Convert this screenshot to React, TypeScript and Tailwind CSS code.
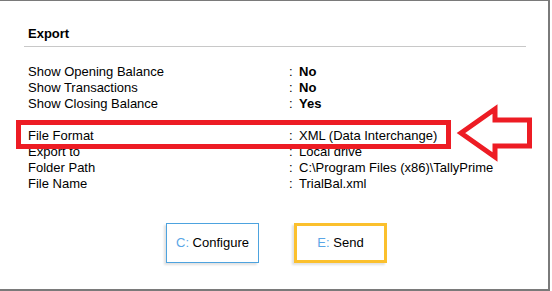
import React from 'react';

const rows1 = [
  { label: 'Show Opening Balance', value: 'No', bold: true },
  { label: 'Show Transactions', value: 'No', bold: true },
  { label: 'Show Closing Balance', value: 'Yes', bold: true },
];

const rows2 = [
  { label: 'File Format', value: 'XML (Data Interchange)' },
  { label: 'Export to', value: 'Local drive' },
  { label: 'Folder Path', value: 'C:\\Program Files (x86)\\TallyPrime' },
  { label: 'File Name', value: 'TrialBal.xml' },
];

const Row = ({ label, value, bold }: { label: string; value: string; bold?: boolean }) => (
  <div className="flex h-[16px] items-center leading-[16px]">
    <span className="w-[261px]">{label}</span>
    <span className="w-[10px]">:</span>
    <span className={bold ? 'font-bold' : ''}>{value}</span>
  </div>
);

export default function App() {
  return (
    <div
      className="relative h-[291px] w-[550px] overflow-hidden border-t border-r-2 border-b-2 border-[#7a7a7a] bg-white text-[13px] text-black"
      style={{ fontFamily: '"Liberation Sans", Arial, sans-serif' }}
    >
      <div className="pt-[25px]">
        <div className="ml-[24px] w-[502px] border-b border-[#c8c8c8] pb-[4px] pl-[4px]">
          <div className="h-[16px] font-bold leading-[16px]">Export</div>
        </div>

        <div className="mt-[17px] pl-[28px]">
          {rows1.map((r) => (
            <Row key={r.label} {...r} />
          ))}
          <div className="h-[16px]" />
          {rows2.map((r) => (
            <Row key={r.label} {...r} />
          ))}
        </div>

        <div className="mt-[31px] flex justify-center gap-[35px] pl-[5px]">
          <div className="flex h-[40px] w-[93px] items-center justify-center border border-[#4da3df] shadow-[-2px_2px_2px_rgba(0,0,0,0.12)]">
            <span className="text-[#5aa6e6]">C:</span>
            <span>&nbsp;Configure</span>
          </div>
          <div className="flex h-[40px] w-[93px] items-center justify-center border-[3px] border-[#fbc02d] shadow-[-2px_2px_2px_rgba(0,0,0,0.12)]">
            <span className="text-[#5aa6e6]">E:</span>
            <span>&nbsp;Send</span>
          </div>
        </div>
      </div>

      {/* annotation: red box around File Format */}
      <div className="absolute left-[16px] top-[119px] h-[29px] w-[435px] border-[5px] border-[#ed1c24]" />

      {/* annotation: red arrow */}
      <svg className="absolute left-[450px] top-[99px]" width="90" height="66" viewBox="450 100 90 66">
        <polygon
          points="461,133 495,109 495,120 529.5,120 529.5,146 495,146 495,157"
          fill="none"
          stroke="#ed1c24"
          strokeWidth="5"
          strokeLinejoin="miter"
          strokeMiterlimit="4"
        />
      </svg>
    </div>
  );
}
